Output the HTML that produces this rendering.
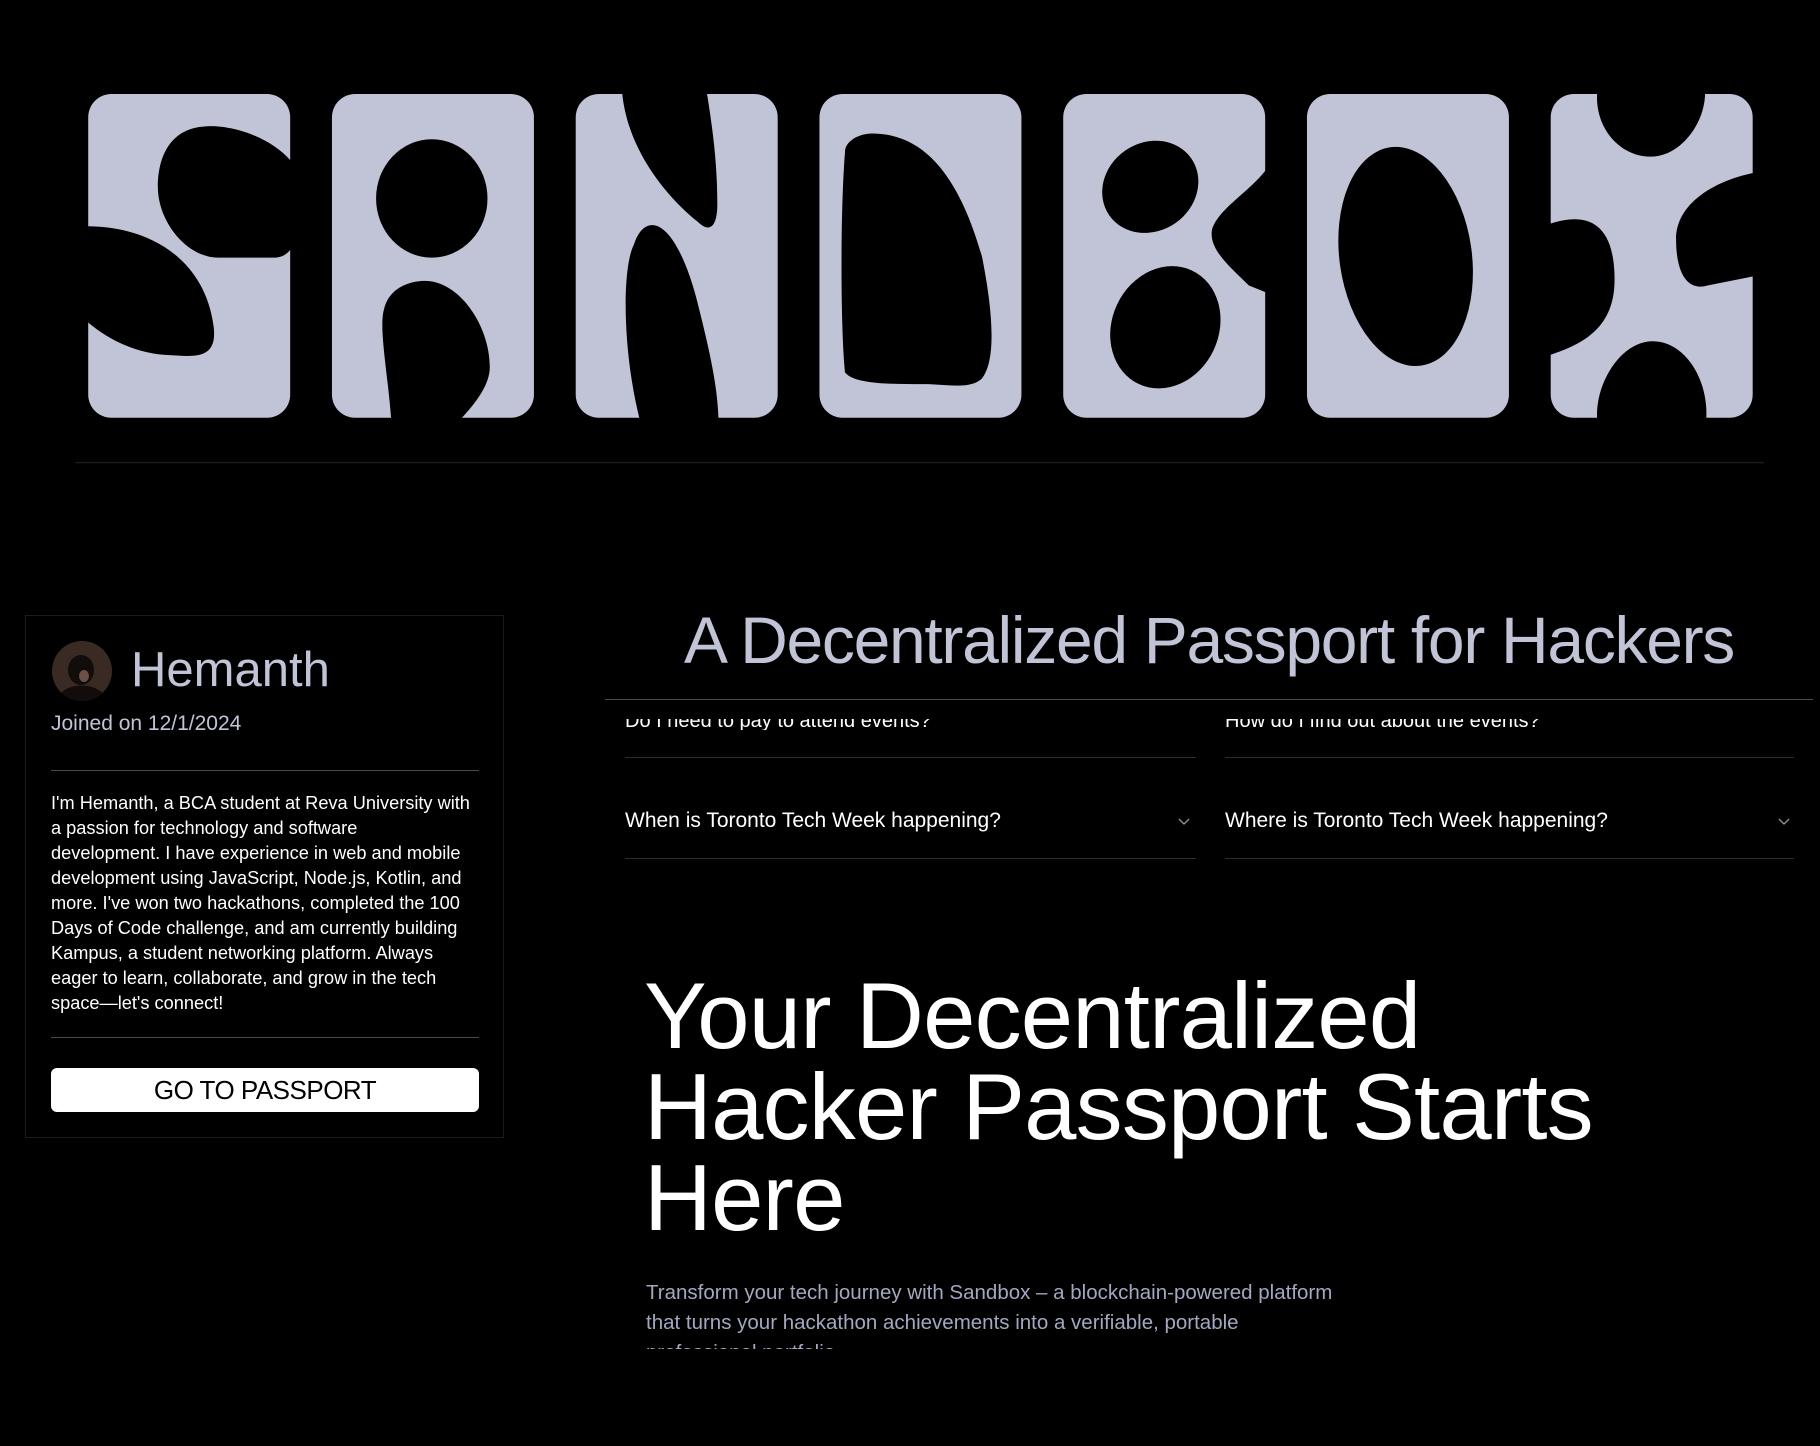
<!DOCTYPE html>
<html><head><meta charset="utf-8"><style>
*{margin:0;padding:0;box-sizing:border-box}
body{width:1820px;height:1446px;background:#000;overflow:hidden;position:relative;font-family:"Liberation Sans",sans-serif}
.abs{position:absolute;white-space:nowrap}
.card{position:absolute;left:25px;top:615px;width:479px;height:523px;border:1px solid #1c1c1c}
.hr{position:absolute;height:1px;background:#3a3a3a}
</style></head><body>
<svg class="abs" style="left:0;top:0" width="1820" height="1446" viewBox="0 0 1568 1246" preserveAspectRatio="none">
<g fill="#c1c4d6">
<rect x="76" y="81" width="174" height="279" rx="20"/>
<rect x="286" y="81" width="174" height="279" rx="20"/>
<rect x="496" y="81" width="174" height="279" rx="20"/>
<rect x="706" y="81" width="174" height="279" rx="20"/>
<rect x="916" y="81" width="174" height="279" rx="20"/>
<rect x="1126" y="81" width="174" height="279" rx="20"/>
<rect x="1336" y="81" width="174" height="279" rx="20"/>
</g>
<g fill="#000">
<g transform="translate(76,81)">
<path d="M175,58 C155,35 120,26 100,28 C70,30 60,55 60,80 C60,110 85,141 112,141 L160,141 C168,141 172,137 175,133 Z"/>
<path d="M-1,114 C50,114 100,140 108,200 C112,230 90,226 70,225 C40,224 15,210 -1,196 Z"/>
</g>
<g transform="translate(286,81)">
<ellipse cx="86" cy="90" rx="48" ry="51"/>
<path d="M51,280 C48,240 40,200 45,185 C50,165 70,161 80,161 C110,161 136,200 136,235 C136,250 125,265 111,280 Z"/>
</g>
<g transform="translate(496,81)">
<path d="M40,-1 C45,50 80,90 105,110 C115,120 122,115 122,95 C122,60 118,30 113,-1 Z"/>
<path d="M55,280 C40,220 40,150 50,130 C55,115 62,113 66,113 C80,113 95,140 105,180 C115,220 122,250 123,280 Z"/>
</g>
<g transform="translate(706,81)">
<path d="M22,50 C22,40 35,34 45,34 C90,34 120,70 140,140 C150,190 152,230 140,245 C130,255 110,250 90,250 C60,250 30,250 22,240 C18,200 18,100 22,50 Z"/>
</g>
<g transform="translate(916,81)">
<ellipse cx="75" cy="80" rx="43" ry="38" transform="rotate(-35 75 80)"/>
<ellipse cx="88" cy="201" rx="46" ry="54" transform="rotate(25 88 201)"/>
<path d="M175,65 C160,85 132,100 128,118 C126,135 145,150 160,165 L175,171 Z"/>
</g>
<g transform="translate(1126,81)">
<ellipse cx="85" cy="140" rx="57" ry="95" transform="rotate(-8 85 140)"/>
</g>
<g transform="translate(1336,81)">
<path d="M40,-1 C38,30 60,54 86,54 C112,54 133,25 133,-1 Z"/>
<path d="M40,280 C38,250 60,213 88,213 C115,213 136,245 134,280 Z"/>
<path d="M-1,112 C20,105 55,100 55,160 C55,200 30,215 -1,225 Z"/>
<path d="M175,68 C140,75 108,95 108,125 C108,155 118,170 135,165 L175,157 Z"/>
</g>
</g>
<rect x="65" y="398" width="1455" height="1.2" fill="#1c1c1c"/>
</svg>

<div class="card">
  <svg class="abs" style="left:25px;top:24px" width="62" height="62" viewBox="0 0 62 62">
    <defs><clipPath id="c"><circle cx="31" cy="31" r="30"/></clipPath></defs>
    <circle cx="31" cy="31" r="30" fill="#3a2a24"/>
    <g clip-path="url(#c)"><ellipse cx="30" cy="30" rx="13" ry="15" fill="#120c0a"/><path d="M5,62 C10,40 50,40 58,62 Z" fill="#120c0a"/><ellipse cx="33" cy="36" rx="5" ry="6" fill="#6a5048"/></g>
  </svg>
  <div class="abs" style="left:105px;top:26px;font-size:49px;color:#c1c4d6;line-height:56px">Hemanth</div>
  <div class="abs" style="left:25px;top:96px;font-size:21px;color:#c1c4d6;line-height:24px">Joined on 12/1/2024</div>
  <div class="hr" style="left:25px;top:154px;width:428px;background:#4a4a50"></div>
  <div class="abs" style="left:25px;top:175px;font-size:18.2px;line-height:25px;color:#fff">I'm Hemanth, a BCA student at Reva University with<br>a passion for technology and software<br>development. I have experience in web and mobile<br>development using JavaScript, Node.js, Kotlin, and<br>more. I've won two hackathons, completed the 100<br>Days of Code challenge, and am currently building<br>Kampus, a student networking platform. Always<br>eager to learn, collaborate, and grow in the tech<br>space—let's connect!</div>
  <div class="hr" style="left:25px;top:421px;width:428px;background:#4a4a50"></div>
  <div class="abs" style="left:25px;top:452px;width:428px;height:44px;background:#fff;border-radius:6px;color:#000;font-size:26px;line-height:44px;text-align:center;letter-spacing:-0.5px">GO TO PASSPORT</div>
</div>

<div class="abs" style="left:605px;top:598px;width:1208px;text-align:center;font-size:66px;line-height:84px;color:#c1c4d6;letter-spacing:-1.3px">A Decentralized Passport for Hackers</div>
<div class="hr" style="left:605px;top:699px;width:1208px;background:#4a4a4a"></div>

<div class="abs" style="left:625px;top:719px;height:11px;overflow:hidden;width:560px"><div style="font-size:20px;line-height:24px;color:#fff;margin-top:-10px">Do I need to pay to attend events?</div></div>
<div class="abs" style="left:1225px;top:719px;height:11px;overflow:hidden;width:560px"><div style="font-size:20px;line-height:24px;color:#fff;margin-top:-10px">How do I find out about the events?</div></div>
<div class="hr" style="left:625px;top:757px;width:571px;background:#2e2e2e"></div>
<div class="hr" style="left:1225px;top:757px;width:569px;background:#2e2e2e"></div>
<div class="abs" style="left:625px;top:808px;font-size:21px;line-height:26px;color:#fff">When is Toronto Tech Week happening?</div>
<div class="abs" style="left:1225px;top:808px;font-size:21px;line-height:26px;color:#fff">Where is Toronto Tech Week happening?</div>
<svg class="abs" style="left:1178px;top:818px" width="12" height="8"><path d="M1,1 L6,6 L11,1" stroke="#999" fill="none" stroke-width="1.3"/></svg>
<svg class="abs" style="left:1778px;top:818px" width="12" height="8"><path d="M1,1 L6,6 L11,1" stroke="#999" fill="none" stroke-width="1.3"/></svg>
<div class="hr" style="left:625px;top:858px;width:571px;background:#2e2e2e"></div>
<div class="hr" style="left:1225px;top:858px;width:569px;background:#2e2e2e"></div>

<div class="abs" style="left:644px;top:970px;font-size:94px;line-height:91px;color:#fff;letter-spacing:-0.8px">Your Decentralized<br>Hacker Passport Starts<br>Here</div>

<div class="abs" style="left:646px;top:1278px;width:800px;height:71px;overflow:hidden;font-size:20.5px;line-height:30px;color:#a3a8c0">Transform your tech journey with Sandbox – a blockchain-powered platform<br>that turns your hackathon achievements into a verifiable, portable<br>professional portfolio</div>
</body></html>
